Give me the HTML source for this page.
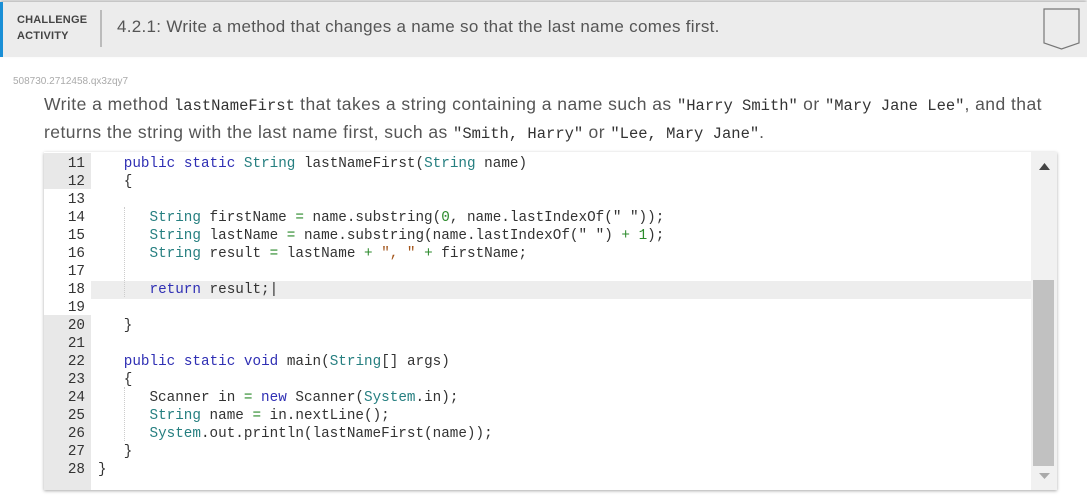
<!DOCTYPE html>
<html><head><meta charset="utf-8"><style>
body{margin:0;width:1087px;height:496px;background:#fff;position:relative;overflow:hidden;font-family:"Liberation Sans",sans-serif}
.hdr{position:absolute;left:0;top:2px;width:1087px;height:55px;background:#ececec;box-shadow:0 -2px 3px #bbb}
.blue{position:absolute;left:0;top:2px;width:3px;height:55px;background:#1a8fd6}
.ca{position:absolute;left:17px;top:12px;font-size:11px;font-weight:bold;color:#444;line-height:16px;letter-spacing:.2px}
.div{position:absolute;left:100px;top:10px;width:2px;height:37px;background:#bbb}
.title{position:absolute;left:117px;top:17px;font-size:17px;color:#555;letter-spacing:.3px}
.id{position:absolute;left:13px;top:76px;font-size:10px;color:#aaa}
.desc{position:absolute;left:44px;top:91px;font-size:17.5px;color:#555;line-height:26px;white-space:nowrap;letter-spacing:0.45px}
.desc code{font-family:"Liberation Mono",monospace;font-size:15.5px;color:#333;letter-spacing:0}
.ed{position:absolute;left:44px;top:152px;width:1013px;height:338px;background:#fff;box-shadow:0 1px 3px #aaa}
.g{position:absolute;left:0;width:47px;height:18px;background:#e8e8e8}
pre{margin:0;position:absolute;top:3px;font-family:"Liberation Mono",monospace;font-size:14.3px;line-height:18px;color:#333}
.nums{left:0;width:41px;text-align:right}
.code{left:54px}
.k{color:#2f2fb4}.t{color:#267f80}.s{color:#a3551b}.o{color:#2b8a2b}
.hl{position:absolute;left:47px;top:129px;width:940px;height:18px;background:#ededed}
.sb{position:absolute;left:987px;top:0;width:26px;height:338px;background:#f1f1f1}
.th{position:absolute;left:2px;top:128px;width:21px;height:186px;background:#c1c1c1}
.guide{position:absolute;left:80px;width:0;border-left:1px dotted #ccc}
</style></head><body>
<div class="hdr"></div><div class="blue"></div>
<div class="ca">CHALLENGE<br>ACTIVITY</div>
<div class="div"></div>
<div class="title">4.2.1: Write a method that changes a name so that the last name comes first.</div>
<svg style="position:absolute;left:1043px;top:8px" width="38" height="42"><path d="M1 1H36V35L18.5 41L1 35Z" fill="none" stroke="#777" stroke-width="1.2"/></svg>
<div class="id">508730.2712458.qx3zqy7</div>
<div class="desc">Write a method <code>lastNameFirst</code> that takes a string containing a name such as <code>"Harry Smith"</code> or <code>"Mary Jane Lee"</code>, and that<br>returns the string with the last name first, such as <code>"Smith, Harry"</code> or <code>"Lee, Mary Jane"</code>.</div>
<div class="ed">
<div class="g" style="top:1px;height:36px"></div>
<div class="g" style="top:163px;height:175px"></div>
<div class="hl"></div>
<div class="guide" style="top:55px;height:90px"></div>
<div class="guide" style="top:235px;height:54px"></div>
<pre class="nums">11
12
13
14
15
16
17
18
19
20
21
22
23
24
25
26
27
28</pre>
<pre class="code">   <span class="k">public</span> <span class="k">static</span> <span class="t">String</span> lastNameFirst(<span class="t">String</span> name)
   {

      <span class="t">String</span> firstName <span class="o">=</span> name.substring(<span class="o">0</span>, name.lastIndexOf(" "));
      <span class="t">String</span> lastName <span class="o">=</span> name.substring(name.lastIndexOf(" ") <span class="o">+</span> <span class="o">1</span>);
      <span class="t">String</span> result <span class="o">=</span> lastName <span class="o">+</span> <span class="s">", "</span> <span class="o">+</span> firstName;

      <span class="k">return</span> result;|

   }

   <span class="k">public</span> <span class="k">static</span> <span class="k">void</span> main(<span class="t">String</span>[] args)
   {
      Scanner in <span class="o">=</span> <span class="k">new</span> Scanner(<span class="t">System</span>.in);
      <span class="t">String</span> name <span class="o">=</span> in.nextLine();
      <span class="t">System</span>.out.println(lastNameFirst(name));
   }
}</pre>
<div class="sb"><div class="th"></div>
<svg style="position:absolute;left:8px;top:11px" width="11" height="7"><path d="M0 7L5.5 0L11 7Z" fill="#444"/></svg>
<svg style="position:absolute;left:8px;top:321px" width="11" height="6"><path d="M0 0L5.5 6L11 0Z" fill="#aaa"/></svg>
</div>
</div>
</body></html>
